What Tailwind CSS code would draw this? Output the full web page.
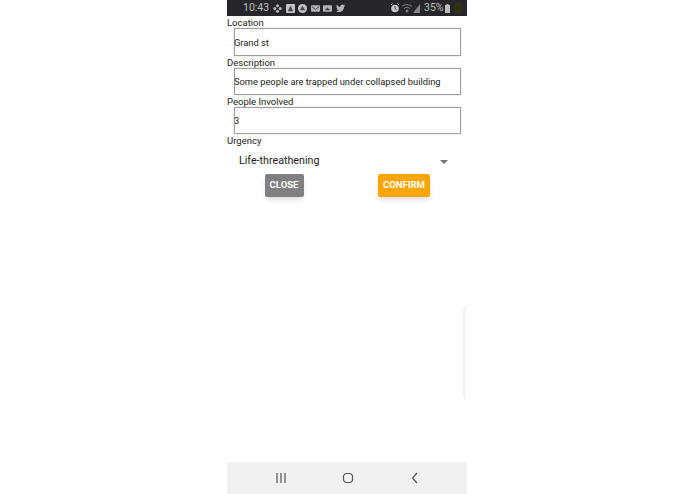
<!DOCTYPE html>
<html lang="en">

<head>
    <meta charset="UTF-8">
    <meta name="viewport" content="width=device-width, initial-scale=1.0">
    <title>Report Incident</title>
    <script src="https://cdn.jsdelivr.net/npm/@tailwindcss/browser@4"></script>
</head>

<body class="bg-white font-['Roboto',sans-serif]">
    <div class="relative ml-[227px] flex h-[494px] w-[240px] flex-col overflow-hidden bg-white text-[#222]">

        <!-- Status bar -->
        <div class="flex h-[16px] shrink-0 items-center bg-[#26262a] pl-[16px] pr-[4px] text-[#bdbdbd]">
            <span class="w-[25px] pt-[1px] text-[10.500px] leading-none">10:43</span>
            <div class="ml-[5px] flex items-center gap-[3.500px]">
                <svg class="h-[9px] w-[9px]" viewBox="0 0 10 10" fill="#b4b4b4"><circle cx="5" cy="2" r="1.7"/><circle cx="5" cy="8" r="1.7"/><circle cx="2" cy="5" r="1.7"/><circle cx="8" cy="5" r="1.7"/></svg>
                <svg class="h-[9px] w-[9px]" viewBox="0 0 10 10"><rect width="10" height="10" rx="1" fill="#c4c4c4"/><path d="M5 2 8 8H2Z" fill="#444"/></svg>
                <svg class="h-[9px] w-[9px]" viewBox="0 0 10 10"><circle cx="5" cy="5" r="5" fill="#c4c4c4"/><path d="M5 2 8 7H2Z" fill="#444"/></svg>
                <svg class="h-[9px] w-[9px]" viewBox="0 0 10 10"><rect y="1.500" width="10" height="7" rx="1" fill="#b4b4b4"/><path d="M1 3 5 6 9 3" fill="none" stroke="#444"/></svg>
                <svg class="h-[9px] w-[9px]" viewBox="0 0 10 10"><rect y="1.500" width="10" height="7" rx="1" fill="#b4b4b4"/><path d="M2 7 5 4 8 7Z" fill="#444"/></svg>
                <svg class="h-[9px] w-[9px]" viewBox="0 0 10 10" fill="#b4b4b4"><path d="M10 2.200 8.900 3.200C8.900 6.500 6.500 9 3.300 9 2 9 1 8.700 0 8 1.200 8.100 2.200 7.800 3 7.100 2 7 1.300 6.400 1 5.500H2C1 5.100.4 4.200.4 3.200L1.400 3.500C.5 2.800.3 1.700.8.800 2 2.200 3.400 3 5 3.100 4.800 1.500 6 .5 7.200.5 7.800.5 8.300.8 8.700 1.200L10 .8 9.200 1.900Z"/></svg>
            </div>
            <div class="ml-auto flex items-center">
                <svg class="h-[10px] w-[10px]" viewBox="0 0 10 10"><circle cx="5" cy="5.500" r="3.800" fill="#c4c4c4"/><path d="M5 3V5.500L6.500 6.500" stroke="#444" fill="none"/><path d="M1 2 2.500 .5M9 2 7.500 .5" stroke="#c4c4c4"/></svg>
                <svg class="ml-[2px] h-[9px] w-[11px]" viewBox="0 0 11 9" fill="none" stroke="#858585"><path d="M0 2.500C3 0 7 0 10 2.500M2 4.500C4 3 6 3 8 4.500"/><circle cx="5" cy="7" r="1" fill="#858585"/></svg>
                <svg class="h-[9px] w-[7px]" viewBox="0 0 7 9" fill="#858585"><path d="M7 0V9H0Z"/></svg>
                <span class="ml-[4px] w-[20px] pt-[1px] text-[10.500px] leading-none">35%</span>
                <svg class="ml-[1px] h-[9px] w-[5px]" viewBox="0 0 5 9" fill="#bdbdbd"><path d="M1.500 0H3.500V1H5V9H0V1H1.500Z"/></svg>
                <span class="ml-[4px] h-[12px] w-[9px] rounded-full bg-[#2f2f14]"></span>
            </div>
        </div>

        <!-- Form -->
        <form class="flex flex-col text-[9.500px]">
            <label class="mt-[1px] h-[11px] leading-[12px]">Location</label>
            <div class="ml-[7px] flex h-[28px] w-[227px] items-center border border-[#a0a0a0] pt-[1px] text-[9.300px] shadow-[0_0_1px_#aaaaaa]"><span class="-ml-[1px]">Grand st</span></div>
            <label class="mt-[1px] h-[11px] leading-[12px]">Description</label>
            <div class="ml-[7px] flex h-[27px] w-[227px] items-center border border-[#a0a0a0] pt-[1px] text-[9.300px] shadow-[0_0_1px_#aaaaaa]"><span class="-ml-[1px]">Some people are trapped under collapsed building</span></div>
            <label class="mt-[1px] h-[11px] leading-[12px]">People Involved</label>
            <div class="ml-[7px] flex h-[27px] w-[227px] items-center border border-[#a0a0a0] pt-[1px] text-[9.300px] shadow-[0_0_1px_#aaaaaa]"><span class="-ml-[1px]">3</span></div>
            <label class="mt-[1px] h-[11px] leading-[12px]">Urgency</label>
            <div class="flex h-[28px] items-center pl-[12px] pr-[19px] pt-[3px] text-[10.700px] text-[#1c1c1c]">
                <span>Life-threathening</span>
                <span class="ml-auto h-0 w-0 border-x-[4px] border-t-[4px] border-x-transparent border-t-[#757575]"></span>
            </div>
            <div class="flex pl-[37.500px]">
                <div class="flex h-[23px] w-[39px] items-center justify-center rounded-[2px] bg-[#808080] text-[9.500px] font-bold text-white shadow-md">CLOSE</div>
                <div class="ml-[74.500px] flex h-[23px] w-[52px] items-center justify-center rounded-[2px] bg-[#ffa500] text-[9.500px] font-bold text-white shadow-md">CONFIRM</div>
            </div>
        </form>

        <!-- Nav bar -->
        <div class="mt-auto flex h-[32px] shrink-0 items-center justify-center gap-[55px] bg-[#f1f1f1] pb-[1px] pl-[2px]">
            <svg class="h-[12px] w-[12px]" viewBox="0 0 12 12" fill="none" stroke="#555" stroke-width="1.200"><path d="M2 1V11M6 1V11M10 1V11"/></svg>
            <svg class="h-[12px] w-[12px]" viewBox="0 0 12 12" fill="none" stroke="#555" stroke-width="1.200"><rect x="1.500" y="1.500" width="9" height="9" rx="3.200"/></svg>
            <svg class="h-[12px] w-[12px]" viewBox="0 0 12 12" fill="none" stroke="#555" stroke-width="1.200"><path d="M8 1 3.500 6 8 11"/></svg>
        </div>

        <!-- Side handle -->
        <div class="absolute left-[236px] top-[306px] h-[94px] w-[6px] rounded-l-[5px] border-l-2 border-[#eeeeee]"></div>
    </div>
</body>

</html>
